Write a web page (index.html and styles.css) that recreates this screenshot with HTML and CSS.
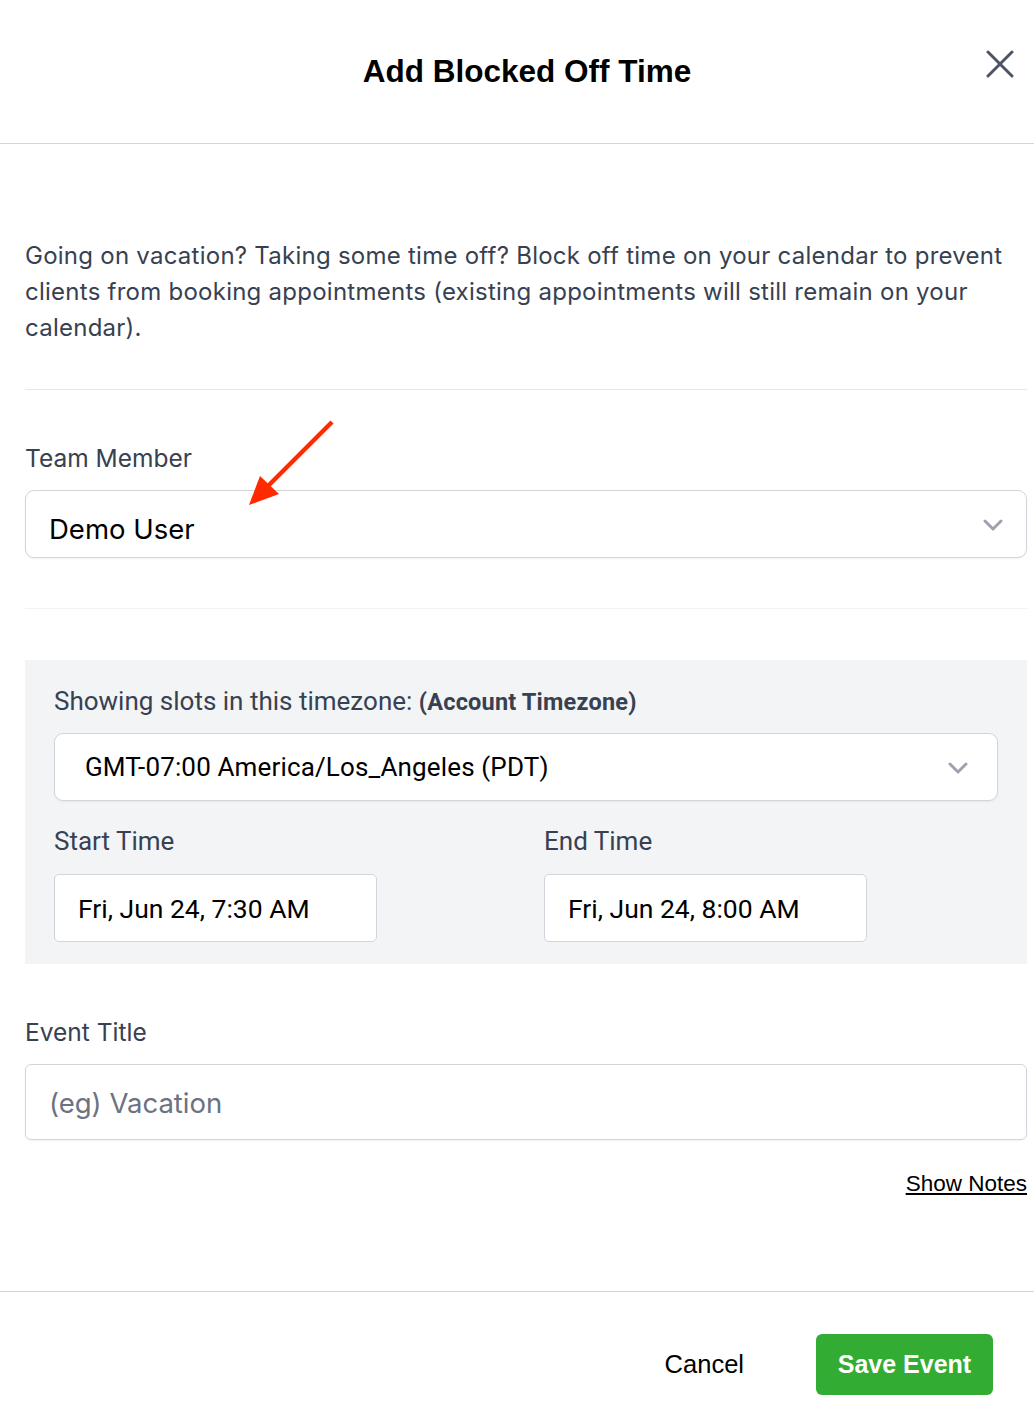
FILE: index.html
```html
<!DOCTYPE html>
<html lang="en">
<head>
<meta charset="utf-8">
<title>Add Blocked Off Time</title>
<link rel="stylesheet" href="styles.css">
</head>
<body>
<div class="modal">
  <header class="modal-header">
    <h1 class="modal-title">Add Blocked Off Time</h1>
    <button class="close-btn" aria-label="Close">
      <svg width="28" height="28" viewBox="0 0 28 28"><path d="M2 2 L26 26 M26 2 L2 26" stroke="#4b5563" stroke-width="3" stroke-linecap="round" fill="none"/></svg>
    </button>
  </header>

  <main class="modal-body">
    <p class="intro">Going on vacation? Taking some time off? Block off time on your calendar to prevent clients from booking appointments (existing appointments will still remain on your calendar).</p>

    <section class="member-section">
      <label class="field-label">Team Member</label>
      <div class="select select-member">
        <span>Demo User</span>
        <svg class="chev" width="20" height="12" viewBox="0 0 20 12"><path d="M2 2 L10 10 L18 2" stroke="#9ca3af" stroke-width="3" fill="none" stroke-linecap="round" stroke-linejoin="round"/></svg>
      </div>
      <svg class="annot-arrow" width="110" height="110" viewBox="0 0 110 110"><line x1="105" y1="4" x2="38" y2="71" stroke="#ff2a00" stroke-width="4.5"/><polygon points="22,87 33,58 52,76" fill="#ff2a00"/></svg>
    </section>

    <section class="tz-panel">
      <div class="tz-label">Showing slots in this timezone: <strong>(Account Timezone)</strong></div>
      <div class="select select-tz">
        <span>GMT-07:00 America/Los_Angeles (PDT)</span>
        <svg class="chev" width="20" height="12" viewBox="0 0 20 12"><path d="M2 2 L10 10 L18 2" stroke="#9ca3af" stroke-width="3" fill="none" stroke-linecap="round" stroke-linejoin="round"/></svg>
      </div>
      <div class="time-grid">
        <div class="time-col">
          <div class="tz-field-label">Start Time</div>
          <div class="time-input">Fri, Jun 24, 7:30 AM</div>
        </div>
        <div class="time-col">
          <div class="tz-field-label">End Time</div>
          <div class="time-input">Fri, Jun 24, 8:00 AM</div>
        </div>
      </div>
    </section>

    <section class="title-section">
      <label class="field-label">Event Title</label>
      <div class="text-input placeholder">(eg) Vacation</div>
      <div class="notes-row"><a class="show-notes" href="#">Show Notes</a></div>
    </section>
  </main>

  <footer class="modal-footer">
    <button class="btn-cancel">Cancel</button>
    <button class="btn-save">Save Event</button>
  </footer>
</div>
</body>
</html>
```
FILE: styles.css
```css
* { box-sizing: border-box; }
html, body {
  margin: 0;
  padding: 0;
  background: #ffffff;
  overflow: hidden;
}
body {
  font-family: Inter, "Noto Sans", sans-serif;
  color: #374151;
}
.modal {
  width: 1054px;
  background: #fff;
}
.modal-header {
  height: 144px;
  border-bottom: 1px solid #d6d6d6;
  display: flex;
  align-items: center;
  justify-content: center;
  position: relative;
}
.modal-title {
  margin: 0;
  font-family: "Liberation Sans", Arial, sans-serif;
  font-weight: 700;
  font-size: 31.5px;
  color: #000;
}
.close-btn {
  position: absolute;
  right: 40px;
  top: 50px;
  border: 0;
  background: none;
  padding: 0;
  width: 28px;
  height: 28px;
  cursor: pointer;
}
.modal-body {
  padding: 94px 27px 0 25px;
}
.intro {
  margin: 0;
  font-size: 24px;
  line-height: 36px;
  color: #374151;
  padding-bottom: 43px;
  border-bottom: 1px solid #e5e7eb;
  letter-spacing: 0.25px;
}
.member-section {
  position: relative;
  padding-top: 53px;
  padding-bottom: 50px;
  border-bottom: 1px solid #f1f2f4;
}
.field-label {
  display: block;
  font-size: 24.5px;
  line-height: 30px;
  color: #374151;
  margin-bottom: 17px;
}
.select {
  display: flex;
  align-items: center;
  justify-content: space-between;
  background: #fff;
  border: 1px solid #d1d5db;
  border-radius: 9px;
  box-shadow: 0 1px 2px rgba(0,0,0,0.05);
}
.select-member {
  height: 68px;
  padding: 0 23px 0 23px;
  font-size: 27.5px;
  color: #000;
}
.select-member span { padding-top: 10px; }
.select-member .chev { margin-top: 2px; }
.annot-arrow {
  position: absolute;
  left: 202px;
  top: 28px;
}
.tz-panel {
  margin-top: 51px;
  background: #f3f4f6;
  padding: 26px 29px 22px 29px;
  font-family: Roboto, "Noto Sans", sans-serif;
}
.tz-label {
  font-size: 26px;
  line-height: 30px;
  color: #374151;
  margin-bottom: 16px;
}
.tz-label strong {
  font-size: 23.5px;
  font-weight: 700;
  letter-spacing: 0.2px;
}
.select-tz {
  height: 68px;
  padding: 0 29px 0 30px;
  font-size: 26px;
  letter-spacing: 0.15px;
  color: #000;
}
.select-tz .chev { margin-top: 2px; }
.time-grid {
  display: grid;
  grid-template-columns: 490px 1fr;
  margin-top: 25px;
}
.tz-field-label {
  font-size: 26px;
  line-height: 30px;
  color: #374151;
  margin-bottom: 18px;
}
.time-input {
  width: 323px;
  height: 68px;
  background: #fff;
  border: 1px solid #d1d5db;
  border-radius: 5px;
  display: flex;
  align-items: center;
  padding-left: 23px;
  font-size: 26.5px;
  color: #000;
}
.title-section {
  padding-top: 53px;
}
.text-input {
  height: 76px;
  border: 1px solid #d1d5db;
  border-radius: 6px;
  display: flex;
  align-items: center;
  padding-left: 23px;
  padding-top: 2px;
  font-size: 27.5px;
  box-shadow: 0 1px 2px rgba(0,0,0,0.05);
}
.placeholder { color: #6b7280; }
.notes-row {
  display: flex;
  justify-content: flex-end;
  margin-top: 30px;
  height: 28px;
  margin-bottom: 93px;
}
.show-notes {
  font-family: "Liberation Sans", Arial, sans-serif;
  font-size: 22.5px;
  line-height: 28px;
  color: #000;
  text-decoration: underline;
}
.modal-footer {
  border-top: 1px solid #d6d6d6;
  padding: 42px 61px 0 0;
  display: flex;
  justify-content: flex-end;
  align-items: center;
  gap: 72px;
}
.btn-cancel {
  border: 0;
  background: none;
  font-family: "Liberation Sans", Arial, sans-serif;
  font-size: 25.5px;
  color: #000;
  padding: 0;
}
.btn-save {
  border: 0;
  background: #33ac33;
  color: #fff;
  font-family: "Liberation Sans", Arial, sans-serif;
  font-weight: 700;
  font-size: 25px;
  height: 61px;
  width: 177px;
  border-radius: 6px;
}
```
